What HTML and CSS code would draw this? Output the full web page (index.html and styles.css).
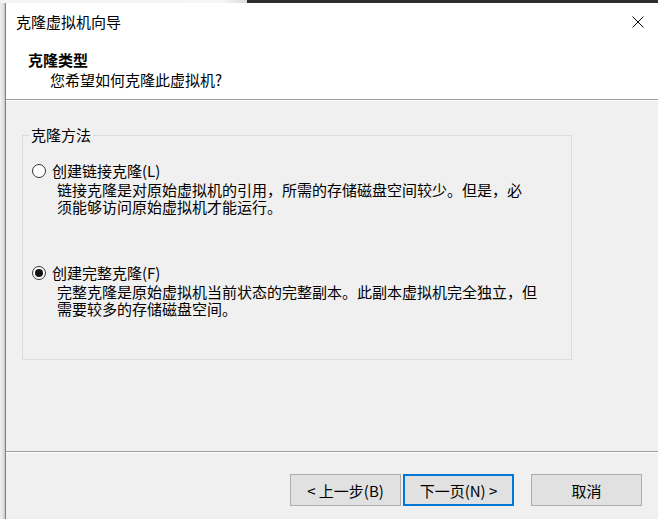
FILE: index.html
```html
<!DOCTYPE html>
<html lang="zh-CN">
<head>
<meta charset="utf-8">
<title>克隆虚拟机向导</title>
<link rel="stylesheet" href="styles.css">
</head>
<body>
<div class="topstrip"><div class="ts-left"></div><div class="ts-right"></div></div>
<div class="desk">
  <div class="shadow"></div>
  <div class="window">
    <div class="header">
      <div class="titlebar">
        <span class="title">克隆虚拟机向导</span>
        <svg class="close" width="12" height="12" viewBox="0 0 12 12"><path d="M0.5 0.5 L11.5 11.5 M11.5 0.5 L0.5 11.5" stroke="#000" stroke-width="1" fill="none"/></svg>
      </div>
      <div class="heading">克隆类型</div>
      <div class="subheading">您希望如何克隆此虚拟机?</div>
    </div>
    <div class="sep"></div>
    <div class="content">
      <div class="group">
        <span class="legend">克隆方法</span>
        <div class="option first">
          <div class="opt-label"><span class="radio"></span>创建链接克隆(L)</div>
          <div class="opt-desc">
            <div class="line">链接克隆是对原始虚拟机的引用，所需的存储磁盘空间较少。但是，必</div>
            <div class="line">须能够访问原始虚拟机才能运行。</div>
          </div>
        </div>
        <div class="option second">
          <div class="opt-label"><span class="radio checked"></span>创建完整克隆(F)</div>
          <div class="opt-desc">
            <div class="line">完整克隆是原始虚拟机当前状态的完整副本。此副本虚拟机完全独立，但</div>
            <div class="line">需要较多的存储磁盘空间。</div>
          </div>
        </div>
      </div>
    </div>
    <div class="sep"></div>
    <div class="footer">
      <button class="btn">&lt; 上一步(B)</button>
      <button class="btn primary">下一页(N) &gt;</button>
      <button class="btn cancel">取消</button>
    </div>
  </div>
</div>
</body>
</html>
```
FILE: styles.css
```css
html, body {
  margin: 0;
  padding: 0;
}
body {
  width: 658px;
  height: 519px;
  overflow: hidden;
  background: #ececec;
  font-family: "Noto Sans CJK SC", "Noto Sans", sans-serif;
  font-size: 15px;
  color: #000;
}
.topstrip {
  display: flex;
  height: 3px;
}
.ts-left {
  width: 247px;
  background: linear-gradient(to right, #f4f4f4, #f6f6f6 90%, #dcdcdc);
}
.ts-right {
  flex: 1;
  background: #2e2e2e;
}
.desk {
  display: flex;
  height: 516px;
}
.shadow {
  width: 5px;
  background: linear-gradient(to right, #f0f0f0, #e2e2e2 60%, #c8c8c8);
}
.window {
  flex: 1;
  display: flex;
  flex-direction: column;
  border-left: 1px solid #7f7f7f;
  background: #f0f0f0;
}
.header {
  background: #fff;
  height: 96px;
  box-sizing: border-box;
  padding-top: 9px;
}
.titlebar {
  display: flex;
  justify-content: space-between;
  align-items: center;
  height: 20px;
  padding: 0 14px 0 10px;
}
.title {
  line-height: 20px;
}
.close {
  display: block;
}
.heading {
  font-weight: bold;
  line-height: 20px;
  margin-top: 18px;
  padding-left: 22px;
}
.subheading {
  line-height: 20px;
  padding-left: 44px;
}
.sep {
  height: 1px;
  border-bottom: 1px solid #ffffff;
  background: #a0a0a0;
}
.content {
  flex: 1;
}
.group {
  margin: 34px 0 0 16px;
  width: 548px;
  height: 223px;
  border: 1px solid #dcdcdc;
  display: flex;
  flex-direction: column;
  align-items: flex-start;
}
.legend {
  line-height: 18px;
  margin: -10px 0 0 6px;
  padding: 0 2px;
  background: #f0f0f0;
}
.option {
  padding-left: 9px;
}
.option.first {
  margin-top: 18px;
}
.option.second {
  margin-top: 49px;
}
.opt-label {
  display: flex;
  align-items: center;
  line-height: 18px;
}
.radio {
  width: 12px;
  height: 12px;
  border: 1px solid #333;
  border-radius: 50%;
  background: #fff;
  margin-right: 6px;
  position: relative;
  flex: none;
}
.radio.checked::after {
  content: "";
  position: absolute;
  left: 2px;
  top: 2px;
  width: 8px;
  height: 8px;
  border-radius: 50%;
  background: #111;
}
.opt-desc {
  margin-top: 1px;
  padding-left: 25px;
  white-space: nowrap;
}
.line {
  height: 17px;
  line-height: 17px;
}
.footer {
  height: 66px;
  display: flex;
  align-items: flex-start;
  padding: 21px 16px 0 0;
  justify-content: flex-end;
  box-sizing: border-box;
}
.btn {
  width: 111px;
  height: 32px;
  margin: 0;
  border: 1px solid #adadad;
  background: #e1e1e1;
  font-family: "Noto Sans CJK SC", "Noto Sans", sans-serif;
  font-size: 15px;
  color: #000;
  padding: 0;
}
.btn.primary {
  border: 2px solid #0078d7;
  margin-left: 2px;
}
.btn.cancel {
  margin-left: 17px;
}
```
